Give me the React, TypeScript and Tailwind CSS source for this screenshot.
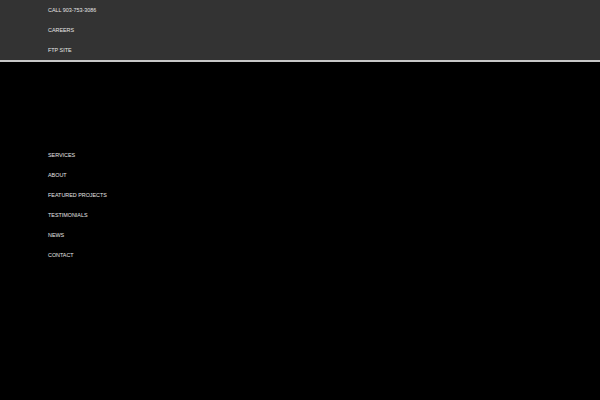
export default function App() {
  const top = ['CALL 903-753-3086', 'CAREERS', 'FTP SITE']
  const nav = ['SERVICES', 'ABOUT', 'FEATURED PROJECTS', 'TESTIMONIALS', 'NEWS', 'CONTACT']

  return (
    <div className="min-h-[400px] w-full bg-black font-['Liberation_Sans',Arial,sans-serif] text-white">
      <header className="border-b-2 border-[#c8c8c8] bg-[#333333]">
        <ul className="flex flex-col pl-12">
          {top.map((t) => (
            <li key={t} className="flex h-5 items-center pt-[2px] text-[5.4px] leading-none text-[#e6e6e6]">
              {t}
            </li>
          ))}
        </ul>
      </header>
      <nav className="pl-12 pt-[83px]">
        <ul className="flex flex-col">
          {nav.map((t) => (
            <li key={t} className="flex h-5 items-center pt-[2px] text-[5.4px] leading-none text-[#e6e6e6]">
              {t}
            </li>
          ))}
        </ul>
      </nav>
    </div>
  )
}
